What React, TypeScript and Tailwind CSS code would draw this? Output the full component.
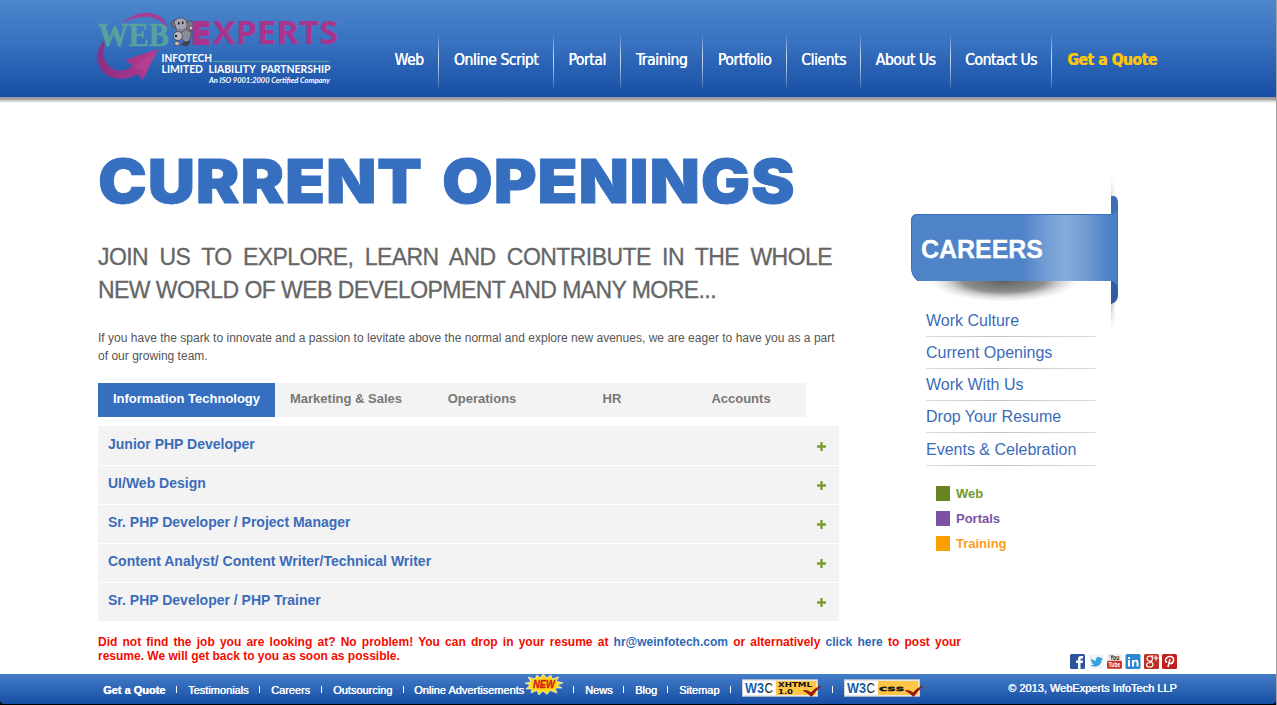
import React from "react";

const nav = [
  { t: "Web", w: "w-[59px]" },
  { t: "Online Script", w: "w-[115px]" },
  { t: "Portal", w: "w-[67px]" },
  { t: "Training", w: "w-[82px]" },
  { t: "Portfolio", w: "w-[84px]" },
  { t: "Clients", w: "w-[74px]" },
  { t: "About Us", w: "w-[90px]" },
  { t: "Contact Us", w: "w-[101px]" },
];

const jobs = [
  "Junior PHP Developer",
  "UI/Web Design",
  "Sr. PHP Developer / Project Manager",
  "Content Analyst/ Content Writer/Technical Writer",
  "Sr. PHP Developer / PHP Trainer",
];

const careers = ["Work Culture", "Current Openings", "Work With Us", "Drop Your Resume", "Events & Celebration"];

function Logo() {
  return (
    <svg width="246" height="78" viewBox="96 10 246 78" className="block">
      <defs>
        <linearGradient id="arrow" x1="0" x2="1">
          <stop offset="0" stopColor="#8c2f83" />
          <stop offset="1" stopColor="#b43a8d" />
        </linearGradient>
      </defs>
      <path d="M122 24 C131 14 143 12 150 13 C160 14 166 20 168 29 C162 20 152 16 144 17 C136 17 128 20 122 24Z" fill="#a63c94" />
      <path d="M103 41 C97 50 96 60 100 68 C106 80 127 82 137 74 L143 80 L158 49 L125 60 L133 66 C122 74 111 71 106 62 C102 55 103 47 105 46Z" fill="url(#arrow)" />
      <path d="M133 66 L157 51 L146 72Z" fill="#c14a9b" opacity="0.45" />
      <text x="98" y="46" textLength="71" lengthAdjust="spacingAndGlyphs" fontFamily="Liberation Serif" fontWeight="700" fontSize="33.500" fill="#56a29d" stroke="#56a29d" strokeWidth="0.5">WEB</text>
      <g stroke="#3d3d4b" strokeWidth="0.7">
        <path d="M181 45 L187 38 L190 42 L187 46Z" fill="#3f3f4d" />
        <ellipse cx="186" cy="34" rx="5" ry="8" fill="#8b8b9a" />
        <ellipse cx="174.500" cy="24" rx="3" ry="4" fill="#777787" />
        <ellipse cx="190" cy="26" rx="4.500" ry="5" fill="#7a7a89" />
        <path d="M174 22 C177 16 186 17 187 23 C188 30 182 34 177 31Z" fill="#a5a5b1" />
        <circle cx="178" cy="36" r="4.500" fill="#b4b4bf" />
        <circle cx="191" cy="28" r="2" fill="#e8b9b5" />
        <ellipse cx="177" cy="43.500" rx="2.500" ry="2" fill="#e8b9b5" />
        <path d="M178 29 Q182 32 185 28" fill="none" />
      </g>
      <path d="M178 22h1.500v2.500H178z M182 21.500h1.500v2.500H182z M175 35h2v2h-2z" fill="#20202c" />
      <text x="192" y="44.200" textLength="18" lengthAdjust="spacingAndGlyphs" fontFamily="Inter" fontWeight="800" fontSize="30.500" fill="#a8348d" stroke="#a8348d" strokeWidth="2" strokeLinejoin="round">E</text>
      <text x="212.500" y="44" textLength="125.500" lengthAdjust="spacingAndGlyphs" fontFamily="Open Sans" fontWeight="700" fontSize="31.500" fill="#a8348d">XPERTS</text>
      <g fill="#fff" fontFamily="Lato, sans-serif">
        <text x="161.500" y="61.800" textLength="50.500" lengthAdjust="spacingAndGlyphs" fontWeight="700" fontSize="12">INFOTECH</text>
        <text x="161.500" y="73" textLength="169" lengthAdjust="spacingAndGlyphs" fontWeight="700" fontSize="10.400" wordSpacing="3">LIMITED LIABILITY PARTNERSHIP</text>
        <text x="209" y="83" textLength="121" lengthAdjust="spacingAndGlyphs" fontWeight="700" fontStyle="italic" fontSize="7.500">An ISO 9001:2000 Certified Company</text>
      </g>
      <path d="M213 61.500H329" stroke="#4a9aa0" strokeWidth="1.400" />
    </svg>
  );
}

function Ribbon() {
  return (
    <svg width="212" height="154" viewBox="908 176 212 154" className="block">
      <defs>
        <linearGradient id="rib" x1="0" x2="1">
          <stop offset="0" stopColor="#4e83c7" />
          <stop offset="0.540" stopColor="#5084c8" />
          <stop offset="0.660" stopColor="#749fd5" />
          <stop offset="0.750" stopColor="#86abdb" />
          <stop offset="0.840" stopColor="#749dd4" />
          <stop offset="0.940" stopColor="#5184c8" />
          <stop offset="1" stopColor="#4a7fc4" />
        </linearGradient>
        <radialGradient id="shade">
          <stop offset="0" stopColor="#333" stopOpacity="0.800" />
          <stop offset="0.550" stopColor="#444" stopOpacity="0.600" />
          <stop offset="0.800" stopColor="#777" stopOpacity="0.220" />
          <stop offset="1" stopColor="#999" stopOpacity="0" />
        </radialGradient>
        <linearGradient id="side" x1="0" x2="1">
          <stop offset="0" stopColor="#777" stopOpacity="0.650" />
          <stop offset="1" stopColor="#aaa" stopOpacity="0" />
        </linearGradient>
        <linearGradient id="fadeMask" x1="0" y1="0" x2="0" y2="1">
          <stop offset="0" stopColor="#000" />
          <stop offset="0.250" stopColor="#fff" />
          <stop offset="0.750" stopColor="#fff" />
          <stop offset="1" stopColor="#000" />
        </linearGradient>
        <mask id="m"><rect x="1100" y="178" width="20" height="152" fill="url(#fadeMask)" /></mask>
      </defs>
      <rect x="1111" y="178" width="5" height="150" fill="url(#side)" mask="url(#m)" />
      <ellipse cx="1004" cy="280" rx="75" ry="22" fill="url(#shade)" />
      <path d="M1111 196h3q4 1 4 7v15h-7Z" fill="#3d70b3" />
      <path d="M1111 278h7v17q0 7-7 9Z" fill="#2e5ca6" />
      <path d="M917 214H1111Q1117 213 1118 203V289Q1116 281 1111 281H918Q911 276 911 267V221Q911 214 917 214Z" fill="url(#rib)" />
      <path d="M918 281Q911.500 276 911.500 267V221Q911.500 214.500 917 214.500H1111Q1116 214 1117.500 206V288" fill="none" stroke="#3a70bd" strokeWidth="1" />
      <text x="921" y="258" textLength="122" lengthAdjust="spacingAndGlyphs" fontFamily="Liberation Sans" fontWeight="700" fontSize="26.500" fill="#fff" stroke="#fff" strokeWidth="0.300">CAREERS</text>
    </svg>
  );
}

function W3C({ kind }: { kind: "xhtml" | "css" }) {
  return (
    <svg width="81" height="19" viewBox="0 0 81 19" className="block shrink-0 [text-shadow:none]">
      <rect x="0" y="0.500" width="76" height="17" fill="#fff" />
      <rect x="0.500" y="1" width="75" height="16" fill="none" stroke="#bbb" strokeWidth="0.700" />
      <rect x="34" y="2" width="40.500" height="14" fill="#fdc647" />
      <text x="3" y="14" textLength="19" lengthAdjust="spacingAndGlyphs" fontFamily="Liberation Sans" fontWeight="700" fontSize="14" fill="#1a5fac">W3</text>
      <text x="22.500" y="14" textLength="8.500" lengthAdjust="spacingAndGlyphs" fontFamily="Liberation Sans" fontSize="14" fill="#222">C</text>
      {kind === "xhtml" ? (
        <g fontFamily="DejaVu Sans" fontWeight="700" fontSize="6.800" fill="#111">
          <text x="36" y="8.200" textLength="34" lengthAdjust="spacingAndGlyphs">XHTML</text>
          <text x="36" y="15" textLength="15" lengthAdjust="spacingAndGlyphs">1.0</text>
        </g>
      ) : (
        <text x="35" y="11.500" textLength="25" lengthAdjust="spacingAndGlyphs" fontFamily="DejaVu Sans" fontWeight="700" fontSize="7.500" fill="#111" stroke="#111" strokeWidth="0.300">css</text>
      )}
      <path d="M61.500 11.500L66 12L69 14Q73 9 79 7Q73 12 69.500 17.500Q66 14 61.500 11.500Z" fill="#951c0c" stroke="#951c0c" />
    </svg>
  );
}

function NewBurst() {
  return (
    <svg width="38" height="22" viewBox="0 0 38 22" className="block [text-shadow:none]">
      <path d="M18.500 0L21.500 4L26 1L27 5L34 3L31 7L38 9L32 11L37 14L30 14L32 19L25 16.500L22 20.500L18 17L14 21L12 16.500L6 19L7 15L1 15L5 11L0 9L6 8L3 3L10 5L12 1L15 4Z" fill="#ffda13" stroke="#fff" strokeWidth="0.600" />
      <text x="8" y="13.500" textLength="22" lengthAdjust="spacingAndGlyphs" fontFamily="Liberation Sans" fontWeight="700" fontStyle="italic" fontSize="10" fill="#cf2412" stroke="#cf2412" strokeWidth="0.400">NEW</text>
    </svg>
  );
}

function Socials() {
  return (
    <svg width="107" height="15" viewBox="0 0 107 15" className="block">
      <g>
        <rect width="15" height="15" rx="1.500" fill="#2c559e" />
        <path d="M8 15V9H6V6.500H8V5Q8 2 11 2H13V4.500H11.500Q10.500 4.500 10.500 5.500V6.500H13L12.500 9H10.500V15Z" fill="#fff" />
      </g>
      <g>
        <rect x="19" y="0.300" width="14.500" height="14.500" rx="1.500" fill="#f2f3f4" />
        <path d="M20.500 4Q23 6.800 26 6.800Q25.600 3 28.500 3Q30 3 30.800 3.900L32.500 3.400L31.700 4.800L33 4.700L31.600 6.100Q31.600 11.500 26 12.500Q22.500 12.700 20.500 11.300Q22.600 11.300 24 10.300Q22 10 21.500 8.600H22.700Q20.800 7.600 20.800 6H21.800Q20.500 5 20.500 4Z" fill="#36a1dc" />
      </g>
      <g>
        <rect x="37" width="15" height="15" rx="1.500" fill="#eee" />
        <text x="40" y="6" textLength="9.500" lengthAdjust="spacingAndGlyphs" fontFamily="Liberation Sans" fontWeight="700" fontSize="6.500" fill="#222">You</text>
        <rect x="37" y="6.800" width="15" height="8" rx="1.500" fill="#c93128" />
        <text x="38.500" y="13.200" textLength="12" lengthAdjust="spacingAndGlyphs" fontFamily="Liberation Sans" fontWeight="700" fontSize="6.500" fill="#fff">Tube</text>
      </g>
      <g>
        <rect x="55.500" width="15" height="15" rx="1.500" fill="#2d86cf" />
        <path d="M58 6h2v6.500h-2zM58 3h2v2h-2zM62 6h2v1q1-1.300 2.500-1.200q2 .2 2 2.700v4h-2V9q0-1.500-1.100-1.500Q64 7.500 64 9v3.500h-2z" fill="#fff" />
      </g>
      <g>
        <rect x="74" width="15" height="15" rx="1.500" fill="#be3024" />
        <path d="M80.500 2Q77 2 77 4.500T80 7Q80 8 81 8.500Q77 8.500 76.500 10.500Q76.500 13 79.500 13Q83 13 83 10.500Q83 9 81.500 8Q80.800 7.500 82 6.500Q83 5.500 82.200 3.500Q81.800 2.500 80.500 2ZM80.500 2H84M86 1.500v5M83.500 4h5" fill="none" stroke="#fff" strokeWidth="1.200" />
      </g>
      <g>
        <rect x="92" width="15" height="15" rx="1.500" fill="#c2201c" />
        <path d="M97 8.700Q94.300 6.500 96.500 4Q98 2.300 100.500 2.500Q104 3 103.500 6.500Q102.800 10 100 9.500Q99 9.400 98.700 8.700M100 5L98 13" fill="none" stroke="#fff" strokeWidth="1.600" />
      </g>
    </svg>
  );
}

function FootItem({ children, w }: { children: React.ReactNode; w: string }) {
  return <a className={`${w} shrink-0 whitespace-nowrap pt-[2px]`}>{children}</a>;
}
function Bar({ w }: { w: string }) {
  return <span className={`${w} shrink-0 flex`}><i className="block h-[7px] w-px bg-white" /></span>;
}

export default function App() {
  return (
    <div className="flex h-[705px] w-[1277px] flex-col overflow-hidden border-r border-[#a3a3a3] bg-white font-['Liberation_Sans',Arial,sans-serif]">
      <header className="flex h-[97px] shrink-0 bg-[linear-gradient(180deg,#4c86cc_0%,#3771bf_45%,#174ea6_100%)] pl-[96px]">
        <div className="w-[284px] shrink-0 pt-[10px]"><Logo /></div>
        <nav className="mt-[36px] flex h-[52px] font-['DejaVu_Sans_Condensed','DejaVu_Sans',sans-serif] text-[15.500px] leading-[49px] tracking-[-0.420px] text-white [text-shadow:0.400px_0_0_#fff]">
          {nav.map((n) => (
            <a key={n.t} className={`${n.w} flex shrink-0 justify-center whitespace-nowrap`}>
              <span className="flex-1 text-center">{n.t}</span>
              <i className="h-[52px] w-px bg-[linear-gradient(180deg,#ffffff20,#ffffffc0_40%,#ffffffa0_60%,#ffffff20)]" />
            </a>
          ))}
          <a className="w-[120px] whitespace-nowrap text-center font-bold tracking-[-0.420px] text-[#fdc60b] [text-shadow:0.500px_0_0_#fdc60b]">Get a Quote</a>
        </nav>
      </header>
      <div className="h-[6px] shrink-0 bg-[linear-gradient(180deg,#949494_0%,#a5a5a5_40%,#dadada_70%,#fff_100%)]" />

      <main className="flex h-[571px] shrink-0 pl-[98px]">
        <section className="w-[810px] shrink-0">
          <h1 className="mt-[42px] h-[72px] w-[740px] origin-left scale-x-[1.075] whitespace-nowrap font-['Inter',sans-serif] text-[61px] font-black leading-[72px] tracking-[0.700px] text-[#366fbf] [-webkit-text-stroke:0.800px_#366fbf] [word-spacing:5px]">CURRENT OPENINGS</h1>
          <h2 className="mt-[24px] w-[734px] text-[23px] leading-[33px] tracking-[-0.560px] text-[#666] [-webkit-text-stroke:0.300px_#666]">
            <span className="block whitespace-nowrap [text-align-last:justify]">JOIN US TO EXPLORE, LEARN AND CONTRIBUTE IN THE WHOLE</span>
            <span className="block whitespace-nowrap">NEW WORLD OF WEB DEVELOPMENT AND MANY MORE...</span>
          </h2>
          <p className="mt-[22px] whitespace-nowrap text-[12px] leading-[18px] tracking-[0.016px] text-[#555]">
            If you have the spark to innovate and a passion to levitate above the normal and explore new avenues, we are eager to have you as a part<br />of our growing team.
          </p>
          <div className="mt-[18px] flex h-[34px] w-[708px] bg-[#f3f3f3] text-center text-[13px] font-bold leading-[31px] text-[#777]">
            <a className="w-[177px] bg-[#366fbf] text-white">Information Technology</a>
            <a className="w-[142px]">Marketing &amp; Sales</a>
            <a className="w-[130px]">Operations</a>
            <a className="w-[130px]">HR</a>
            <a className="w-[128px]">Accounts</a>
          </div>
          <ul className="mt-[9px] flex w-[741px] flex-col gap-px">
            {jobs.map((j, i) => (
              <li key={j} className={`${i === 0 ? "h-[39px] pt-px" : "h-[38px]"} flex justify-between bg-[#f3f3f3] pl-[10px] pr-[13px] text-[14px] font-bold leading-[35px] text-[#3b6cb9]`}>
                <span className="whitespace-nowrap">{j}</span>
                <svg width="9" height="9" viewBox="0 0 9 9" className="mt-[15px]"><path d="M0 4.500h9M4.500 0v9" stroke="#7b9d2d" strokeWidth="2.400" /></svg>
              </li>
            ))}
          </ul>
          <div className="mt-[14px] w-[863px] text-[12px] font-bold leading-[14px] text-[#f40b00]">
            <p className="whitespace-nowrap [text-align-last:justify]">Did not find the job you are looking at? No problem! You can drop in your resume at <a className="text-[#2f67b5]">hr@weinfotech.com</a> or alternatively <a className="text-[#2f67b5]">click here</a> to post your</p>
            <p>resume. We will get back to you as soon as possible.</p>
          </div>
        </section>
        <aside className="w-[269px] pt-[73px]">
          <Ribbon />
          <ul className="-mt-[25px] ml-[18px] w-[170px] text-[16px] leading-[31px] text-[#3b6cb9]">
            {careers.map((c, i) => (
              <li key={c} className={`${i === 4 ? "pt-px" : ""} flex flex-col whitespace-nowrap`}>
                <span className="h-[31px]">{c}</span>
                <i className="block h-px bg-[linear-gradient(90deg,#ddd,#c4c4c4_40%,#ddd)]" />
              </li>
            ))}
          </ul>
          <ul className="ml-[28px] mt-[15px] text-[13px] font-bold leading-[25px]">
            <li className="flex items-center gap-[6px] text-[#71992a]"><i className="h-[15px] w-[14px] bg-[#66841f]" />Web</li>
            <li className="flex items-center gap-[6px] text-[#7d52a5]"><i className="h-[15px] w-[14px] bg-[#7d52a5]" />Portals</li>
            <li className="flex items-center gap-[6px] text-[#f99d1c]"><i className="h-[15px] w-[14px] bg-[#f9a000]" />Training</li>
          </ul>
          <div className="ml-[162px] mt-[98px]"><Socials /></div>
        </aside>
      </main>

      <div className="flex h-[31px] shrink-0 bg-black">
        <footer className="flex h-[30px] w-full items-center rounded-b-[4px] bg-[linear-gradient(180deg,#437dc6,#174ea6)] pl-[103px] text-[11px] leading-[32px] text-white [text-shadow:0.400px_0_0_#fff]">
          <FootItem w="w-[73px] font-bold">Get a Quote</FootItem><Bar w="w-[12px]" />
          <FootItem w="w-[71px]">Testimonials</FootItem><Bar w="w-[12px]" />
          <FootItem w="w-[50px]">Careers</FootItem><Bar w="w-[12px]" />
          <FootItem w="w-[70px]">Outsourcing</FootItem><Bar w="w-[11px]" />
          <FootItem w="w-[111px]">Online Advertisements</FootItem>
          <span className="-mt-[9px] w-[48px] shrink-0"><NewBurst /></span><Bar w="w-[12px]" />
          <FootItem w="w-[38px]">News</FootItem><Bar w="w-[12px]" />
          <FootItem w="w-[32px]">Blog</FootItem><Bar w="w-[12px]" />
          <FootItem w="w-[51px]">Sitemap</FootItem><Bar w="w-[12px]" />
          <span className="-mt-px w-[90px] shrink-0"><W3C kind="xhtml" /></span><Bar w="w-[12px]" />
          <span className="-mt-px w-[164px] shrink-0"><W3C kind="css" /></span>
          <span className="-mt-[3px] whitespace-nowrap">© 2013, WebExperts InfoTech LLP</span>
        </footer>
      </div>
    </div>
  );
}
